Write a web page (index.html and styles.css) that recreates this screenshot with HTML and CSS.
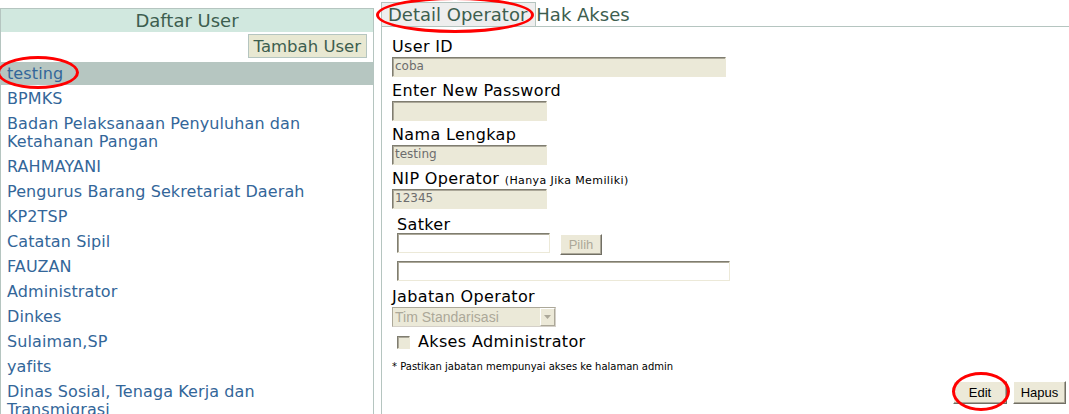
FILE: index.html
```html
<!DOCTYPE html>
<html>
<head>
<meta charset="utf-8">
<link rel="stylesheet" href="styles.css">
</head>
<body>
<div class="page">
  <div class="left">
    <div class="left-head">Daftar User</div>
    <div class="toolbar"><button class="add-btn">Tambah User</button></div>
    <ul class="users">
      <li class="user selected"><span class="name">testing</span></li>
      <li class="user"><span class="name">BPMKS</span></li>
      <li class="user"><span class="name">Badan Pelaksanaan Penyuluhan dan Ketahanan Pangan</span></li>
      <li class="user"><span class="name">RAHMAYANI</span></li>
      <li class="user"><span class="name">Pengurus Barang Sekretariat Daerah</span></li>
      <li class="user"><span class="name">KP2TSP</span></li>
      <li class="user"><span class="name">Catatan Sipil</span></li>
      <li class="user"><span class="name">FAUZAN</span></li>
      <li class="user"><span class="name">Administrator</span></li>
      <li class="user"><span class="name">Dinkes</span></li>
      <li class="user"><span class="name">Sulaiman,SP</span></li>
      <li class="user"><span class="name">yafits</span></li>
      <li class="user"><span class="name">Dinas Sosial, Tenaga Kerja dan Transmigrasi</span></li>
    </ul>
  </div>
  <div class="right">
    <div class="tabs">
      <div class="tab active">Detail Operator</div>
      <div class="tab">Hak Akses</div>
    </div>
    <div class="panel">
      <div class="lbl">User ID</div>
      <div class="inp dis w-long">coba</div>
      <div class="lbl">Enter New Password</div>
      <div class="inp dis w-short"></div>
      <div class="lbl">Nama Lengkap</div>
      <div class="inp dis w-short">testing</div>
      <div class="lbl">NIP Operator <span class="hint">(Hanya Jika Memiliki)</span></div>
      <div class="inp dis w-short">12345</div>
      <div class="satker">
        <div class="lbl satker-lbl">Satker</div>
        <div class="satker-row">
          <div class="inp white w-satker"></div>
          <button class="btn disabled pilih">Pilih</button>
        </div>
        <div class="inp white w-satker2"></div>
      </div>
      <div class="lbl jab">Jabatan Operator</div>
      <div class="select">
        <span class="sel-text">Tim Standarisasi</span>
        <span class="sel-arrow"><svg width="7" height="4" viewBox="0 0 7 4"><path d="M0 0h7L3.5 4z" fill="#aca899"/></svg></span>
      </div>
      <div class="check-row"><span class="check"></span><span class="check-label">Akses Administrator</span></div>
      <div class="note">* Pastikan jabatan mempunyai akses ke halaman admin</div>
      <div class="actions">
        <button class="btn btn-edit">Edit</button>
        <button class="btn btn-hapus">Hapus</button>
      </div>
    </div>
  </div>
  <div class="mark mark-user"></div>
  <div class="mark mark-tab"></div>
  <div class="mark mark-edit"></div>
</div>
</body>
</html>
```
FILE: styles.css
```css
html, body {
  margin: 0;
  padding: 0;
  background: #fff;
}
body {
  font-family: "DejaVu Sans", Verdana, sans-serif;
  font-size: 16px;
  color: #000;
}
.page {
  position: relative;
  display: flex;
  align-items: stretch;
  width: 1069px;
  height: 414px;
  overflow: hidden;
}
.left {
  width: 372px;
  margin-top: 8px;
  border: 1px solid #b5c5c0;
  border-bottom: none;
  flex: none;
}
.left-head {
  height: 23px;
  line-height: 24px;
  background: #d1e8df;
  color: #3d5e4f;
  text-align: center;
  font-size: 18px;
}
.toolbar {
  text-align: right;
  padding: 2px 6px 0 0;
  margin-bottom: 4px;
}
.add-btn {
  font-family: "DejaVu Sans", Verdana, sans-serif;
  font-size: 16.5px;
  color: #3d5e4f;
  background: #e8e8d2;
  border: 1px solid #b5c5c0;
  height: 24px;
  padding: 0 5px;
  margin: 0;
  vertical-align: top;
}
.users {
  list-style: none;
  margin: 0;
  padding: 0;
}
.user {
  padding: 3px 0 2px 6px;
  margin-bottom: 2px;
  line-height: 18px;
  color: #336699;
  letter-spacing: 0.1px;
}
.user .name {
  display: block;
  width: 310px;
}
.user.selected {
  background: #b6c6c1;
}
.right {
  flex: 1;
  margin-left: 7px;
  display: flex;
  flex-direction: column;
}
.tabs {
  display: flex;
  margin-top: 2px;
  height: 24px;
}
.tab {
  line-height: 20px;
  padding-top: 3px;
  color: #3d5e4f;
  font-size: 18px;
}
.tab.active {
  background: #eeeeee;
  border: 1px solid #b5c5c0;
  border-bottom: none;
  padding: 2px 8px 0 6px;
}
.panel {
  flex: 1;
  border-top: 1px solid #b5c5c0;
  border-left: 1px solid #b5c5c0;
  padding: 8px 2px 0 10px;
}
.lbl {
  line-height: 22px;
  font-size: 16px;
  letter-spacing: 0.35px;
  padding-top: 1px;
  height: 21px;
}
.satker-lbl {
  padding-top: 3px;
  height: 19px;
}
.hint {
  font-size: 11px;
  letter-spacing: 0.4px;
}
.inp {
  box-sizing: border-box;
  height: 20px;
  margin-bottom: 2px;
  border: 1px solid;
  border-color: #7f7d70 #ece9d8 #ece9d8 #7f7d70;
  box-shadow: inset 1px 1px 0 #aca899;
  font-size: 12px;
  line-height: 17px;
  padding-left: 2px;
  color: #6d6d6d;
}
.inp.dis {
  background: #ebe9d8;
}
.inp.white {
  background: #fff;
}
.w-long { width: 334px; }
.w-short { width: 155px; }
.w-satker { width: 153px; margin: 0; }
.w-satker2 { width: 333px; margin: 6px 0 0; }
.satker {
  margin-top: 2px;
  padding-left: 5px;
}
.satker-row {
  display: flex;
  align-items: flex-start;
  gap: 10px;
}
.btn {
  font-family: "Liberation Sans", Arial, sans-serif;
  font-size: 13px;
  color: #000;
  background: #ece9d8;
  border: 1px solid;
  border-color: #fff #716f64 #716f64 #fff;
  box-shadow: inset -1px -1px 0 #aca899;
  height: 23px;
  padding: 0;
  margin: 0;
}
.btn.disabled {
  color: #aca899;
}
.pilih {
  height: 21px;
  margin-top: 1px;
  width: 42px;
}
.jab {
  margin-top: 4px;
}
.select {
  display: flex;
  box-sizing: border-box;
  width: 164px;
  height: 20px;
  background: #ebe9d8;
  border: 1px solid #aca899;
  border-color: #aca899 #d4d0c8 #d4d0c8 #aca899;
  font-family: "Liberation Sans", Arial, sans-serif;
  font-size: 14px;
  color: #aca899;
  line-height: 18px;
}
.sel-text {
  flex: 1;
  padding-left: 2px;
}
.sel-arrow {
  width: 15px;
  box-sizing: border-box;
  border: 1px solid;
  border-color: #fff #aca899 #aca899 #fff;
  display: flex;
  align-items: center;
  justify-content: center;
  background: #ece9d8;
}
.check-row {
  display: flex;
  align-items: center;
  height: 22px;
  margin-top: 4px;
  padding-left: 5px;
}
.check {
  box-sizing: border-box;
  width: 13px;
  height: 13px;
  background: #ebe9d8;
  border: 1px solid;
  border-color: #7f7d70 #ece9d8 #ece9d8 #7f7d70;
  box-shadow: inset 1px 1px 0 #aca899;
  margin-right: 8px;
}
.check-label {
  font-size: 16px;
  line-height: 22px;
  letter-spacing: 0.35px;
}
.note {
  font-size: 10px;
  line-height: 14px;
  margin-top: 7px;
}
.actions {
  display: flex;
  justify-content: flex-end;
  gap: 6px;
  margin-top: 7px;
  padding-right: 1px;
}
.btn-edit { width: 54px; }
.btn-hapus { width: 53px; }
.mark {
  position: absolute;
  border: 3px solid #f00;
  border-radius: 50%;
  box-sizing: border-box;
}
.mark-user {
  left: -3px;
  top: 56px;
  width: 82px;
  height: 33px;
}
.mark-tab {
  left: 376px;
  top: -3px;
  width: 158px;
  height: 36px;
}
.mark-edit {
  left: 952px;
  top: 372px;
  width: 58px;
  height: 39px;
}
```
